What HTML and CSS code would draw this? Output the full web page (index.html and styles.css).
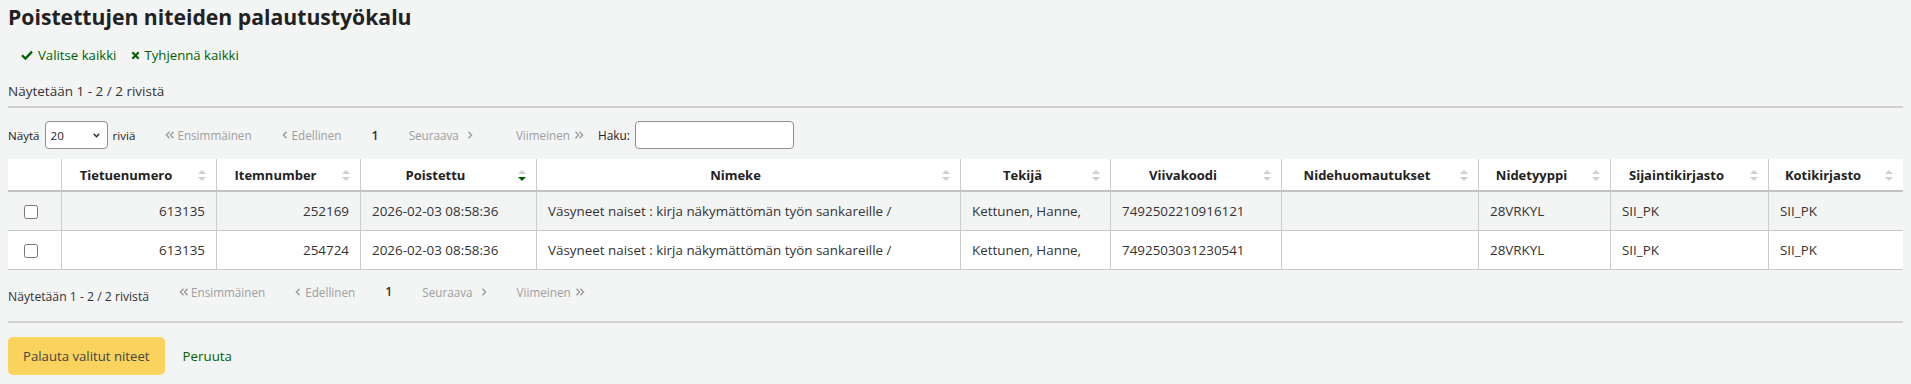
FILE: index.html
```html
<!DOCTYPE html>
<html lang="fi">

<head>
    <meta charset="UTF-8">
    <meta name="viewport" content="width=device-width, initial-scale=1.0">
    <title>Poistettujen niteiden palautustyökalu</title>
    <link rel="stylesheet" href="styles.css">
</head>

<body>
    <main class="page">
        <h1>Poistettujen niteiden palautustyökalu</h1>

        <div class="select-links">
            <a href="#">
                <svg class="icon-check" viewBox="0 0 12 10" width="12" height="10">
                    <polyline points="1,5.2 4.4,8.6 11,1.6" fill="none" stroke="currentColor" stroke-width="2.3" />
                </svg>
                Valitse kaikki
            </a>
            <a href="#">
                <svg class="icon-x" viewBox="0 0 9 9" width="9" height="9">
                    <path d="M1.3 1.3 L7.7 7.7 M7.7 1.3 L1.3 7.7" stroke="currentColor" stroke-width="2.1" />
                </svg>
                Tyhjennä kaikki
            </a>
        </div>

        <div class="info">Näytetään 1 - 2 / 2 rivistä</div>
        <hr class="rule">

        <div class="controls">
            <label class="length">Näytä
                <span class="select-box">
                    <select>
                        <option>20</option>
                        <option>50</option>
                        <option>100</option>
                    </select>
                    <svg viewBox="0 0 7 5" width="7" height="5">
                        <polyline points="0.8,0.8 3.5,3.8 6.2,0.8" fill="none" stroke="#222" stroke-width="1.3" />
                    </svg>
                </span>
                riviä</label>
            <div class="paging paging-top">
                <span class="page-btn disabled">
                    <svg viewBox="0 0 10 8" width="10" height="8">
                        <path d="M4.5 0.8 L1.5 4 L4.5 7.2 M8.5 0.8 L5.5 4 L8.5 7.2" fill="none" stroke="currentColor" stroke-width="1.5" />
                    </svg>Ensimmäinen</span>
                <span class="page-btn disabled">
                    <svg viewBox="0 0 6 8" width="6" height="8">
                        <path d="M4.5 0.8 L1.5 4 L4.5 7.2" fill="none" stroke="currentColor" stroke-width="1.5" />
                    </svg>
                    Edellinen</span>
                <span class="page-btn current">1</span>
                <span class="page-btn disabled next">Seuraava
                    <svg viewBox="0 0 6 8" width="6" height="8">
                        <path d="M1.5 0.8 L4.5 4 L1.5 7.2" fill="none" stroke="currentColor" stroke-width="1.5" />
                    </svg></span>
                <span class="page-btn disabled last">Viimeinen
                    <svg viewBox="0 0 10 8" width="10" height="8">
                        <path d="M1.5 0.8 L4.5 4 L1.5 7.2 M5.5 0.8 L8.5 4 L5.5 7.2" fill="none" stroke="currentColor" stroke-width="1.5" />
                    </svg></span>
            </div>
            <label class="filter">Haku: <input type="search"></label>
        </div>

        <table class="items">
            <colgroup>
                <col class="c-check">
                <col class="c-biblio">
                <col class="c-item">
                <col class="c-date">
                <col class="c-title">
                <col class="c-author">
                <col class="c-barcode">
                <col class="c-notes">
                <col class="c-type">
                <col class="c-holding">
                <col>
            </colgroup>
            <thead>
                <tr>
                    <th></th>
                    <th><div class="sort-head"><span>Tietuenumero</span><svg class="sort" viewBox="0 0 8 13"><polygon class="up" points="0,5 4,1 8,5" /><polygon class="down" points="0,8 4,12 8,8" /></svg></div></th>
                    <th><div class="sort-head"><span>Itemnumber</span><svg class="sort" viewBox="0 0 8 13"><polygon class="up" points="0,5 4,1 8,5" /><polygon class="down" points="0,8 4,12 8,8" /></svg></div></th>
                    <th><div class="sort-head"><span>Poistettu</span><svg class="sort sorted-desc" viewBox="0 0 8 13"><polygon class="up" points="0,5 4,1 8,5" /><polygon class="down" points="0,8 4,12 8,8" /></svg></div></th>
                    <th><div class="sort-head"><span>Nimeke</span><svg class="sort" viewBox="0 0 8 13"><polygon class="up" points="0,5 4,1 8,5" /><polygon class="down" points="0,8 4,12 8,8" /></svg></div></th>
                    <th><div class="sort-head"><span>Tekijä</span><svg class="sort" viewBox="0 0 8 13"><polygon class="up" points="0,5 4,1 8,5" /><polygon class="down" points="0,8 4,12 8,8" /></svg></div></th>
                    <th><div class="sort-head"><span>Viivakoodi</span><svg class="sort" viewBox="0 0 8 13"><polygon class="up" points="0,5 4,1 8,5" /><polygon class="down" points="0,8 4,12 8,8" /></svg></div></th>
                    <th><div class="sort-head"><span>Nidehuomautukset</span><svg class="sort" viewBox="0 0 8 13"><polygon class="up" points="0,5 4,1 8,5" /><polygon class="down" points="0,8 4,12 8,8" /></svg></div></th>
                    <th><div class="sort-head"><span>Nidetyyppi</span><svg class="sort" viewBox="0 0 8 13"><polygon class="up" points="0,5 4,1 8,5" /><polygon class="down" points="0,8 4,12 8,8" /></svg></div></th>
                    <th><div class="sort-head"><span>Sijaintikirjasto</span><svg class="sort" viewBox="0 0 8 13"><polygon class="up" points="0,5 4,1 8,5" /><polygon class="down" points="0,8 4,12 8,8" /></svg></div></th>
                    <th><div class="sort-head"><span>Kotikirjasto</span><svg class="sort" viewBox="0 0 8 13"><polygon class="up" points="0,5 4,1 8,5" /><polygon class="down" points="0,8 4,12 8,8" /></svg></div></th>
                </tr>
            </thead>
            <tbody>
                <tr>
                    <td class="check"><input type="checkbox"></td>
                    <td class="num">613135</td>
                    <td class="num">252169</td>
                    <td>2026-02-03 08:58:36</td>
                    <td>Väsyneet naiset : kirja näkymättömän työn sankareille /</td>
                    <td>Kettunen, Hanne,</td>
                    <td>7492502210916121</td>
                    <td></td>
                    <td>28VRKYL</td>
                    <td>SII_PK</td>
                    <td>SII_PK</td>
                </tr>
                <tr>
                    <td class="check"><input type="checkbox"></td>
                    <td class="num">613135</td>
                    <td class="num">254724</td>
                    <td>2026-02-03 08:58:36</td>
                    <td>Väsyneet naiset : kirja näkymättömän työn sankareille /</td>
                    <td>Kettunen, Hanne,</td>
                    <td>7492503031230541</td>
                    <td></td>
                    <td>28VRKYL</td>
                    <td>SII_PK</td>
                    <td>SII_PK</td>
                </tr>
            </tbody>
        </table>

        <div class="table-footer">
            <div class="info-small">Näytetään 1 - 2 / 2 rivistä</div>
            <div class="paging">
                <span class="page-btn disabled">
                    <svg viewBox="0 0 10 8" width="10" height="8">
                        <path d="M4.5 0.8 L1.5 4 L4.5 7.2 M8.5 0.8 L5.5 4 L8.5 7.2" fill="none" stroke="currentColor" stroke-width="1.5" />
                    </svg>Ensimmäinen</span>
                <span class="page-btn disabled">
                    <svg viewBox="0 0 6 8" width="6" height="8">
                        <path d="M4.5 0.8 L1.5 4 L4.5 7.2" fill="none" stroke="currentColor" stroke-width="1.5" />
                    </svg>
                    Edellinen</span>
                <span class="page-btn current">1</span>
                <span class="page-btn disabled next">Seuraava
                    <svg viewBox="0 0 6 8" width="6" height="8">
                        <path d="M1.5 0.8 L4.5 4 L1.5 7.2" fill="none" stroke="currentColor" stroke-width="1.5" />
                    </svg></span>
                <span class="page-btn disabled last">Viimeinen
                    <svg viewBox="0 0 10 8" width="10" height="8">
                        <path d="M1.5 0.8 L4.5 4 L1.5 7.2 M5.5 0.8 L8.5 4 L5.5 7.2" fill="none" stroke="currentColor" stroke-width="1.5" />
                    </svg></span>
            </div>
        </div>
        <hr class="rule rule-bottom">

        <div class="actions">
            <button class="btn-primary" type="submit">Palauta valitut niteet</button>
            <a href="#">Peruuta</a>
        </div>
    </main>
</body>

</html>
```

FILE: styles.css
```css
* {
    box-sizing: border-box;
}

body {
    margin: 0;
    background-color: #f3f4f4;
    font-family: "Open Sans", sans-serif;
    font-size: 13.4px;
    color: #333;
}

a {
    color: #006100;
    text-decoration: none;
}

.page {
    padding: 4px 8px 0;
}

h1 {
    margin: 0;
    font-size: 21.2px;
    line-height: 26px;
    font-weight: 700;
    color: #222;
}

.select-links {
    margin-top: 15px;
    padding-left: 13px;
    display: flex;
    gap: 15px;
    line-height: 20px;
    font-size: 13.2px;
}

.select-links a {
    display: inline-flex;
    align-items: center;
    gap: 5px;
}

.select-links .icon-x {
    margin-right: -1px;
}

.info {
    margin-top: 16px;
    line-height: 20px;
    font-size: 13.5px;
}

.rule {
    margin: 5px 0 0;
    border: 0;
    border-top: 2px solid #d0d0d0;
}

.controls {
    margin-top: 13px;
    height: 28px;
    display: flex;
    align-items: center;
    font-size: 11.6px;
    color: #222;
}

.length,
.filter {
    display: flex;
    align-items: center;
    gap: 5px;
}

.select-box {
    width: 63px;
    height: 28px;
    display: inline-flex;
    align-items: center;
    padding: 0 7px 0 5px;
    border: 1px solid #8f8f8f;
    border-radius: 4px;
    background-color: #fff;
}

.select-box select {
    flex: 1;
    min-width: 0;
    padding: 0;
    border: 0;
    appearance: none;
    background: transparent;
    font: inherit;
    color: #222;
    outline: none;
}

.paging {
    margin-left: 15px;
    display: flex;
    align-items: center;
    font-size: 11.7px;
}

.page-btn {
    padding: 0 15px;
    display: inline-flex;
    align-items: center;
    gap: 4px;
    white-space: nowrap;
}

.page-btn:first-child svg {
    margin-right: -2px;
}

.page-btn.next {
    gap: 8px;
}

.paging-top .page-btn.last {
    margin-left: 13px;
}

.page-btn.disabled {
    color: #9e9e9e;
}

.page-btn.current {
    color: #333;
    font-weight: 600;
    font-size: 12.4px;
}

.filter {
    margin-left: -1px;
    font-size: 11.8px;
}

.filter input {
    width: 159px;
    height: 28px;
    border: 1px solid #8f8f8f;
    border-radius: 4px;
    background-color: #fff;
}

.items {
    width: 100%;
    margin-top: 10px;
    table-layout: fixed;
    border-collapse: separate;
    border-spacing: 0;
    background-color: #fff;
}

.c-check { width: 54px; }
.c-biblio { width: 155px; }
.c-item { width: 144px; }
.c-date { width: 176px; }
.c-title { width: 424px; }
.c-author { width: 150px; }
.c-barcode { width: 171px; }
.c-notes { width: 197px; }
.c-type { width: 132px; }
.c-holding { width: 158px; }

.items th {
    padding: 9px 10px 7px 8px;
    line-height: 15px;
    font-size: 13px;
    font-weight: 700;
    color: #222;
    border-right: 1px solid #cdcdcd;
    border-bottom: 2px solid #c2c2c2;
}

.items td {
    padding: 9px 11px;
    line-height: 20px;
    white-space: nowrap;
    overflow: hidden;
    border-right: 1px solid #cdcdcd;
    border-bottom: 1px solid #c8c8c8;
}

.items th:last-child,
.items td:last-child {
    border-right: 0;
}

.items tbody tr:nth-child(odd) td {
    background-color: #f3f4f4;
}

.items td.num {
    text-align: right;
}

.items td.check {
    padding: 0 0 0 16px;
}

.items td.check input {
    display: block;
    width: 14px;
    height: 14px;
    margin: 2px 0 0;
}

.sort-head {
    display: flex;
    align-items: center;
}

.sort-head span {
    flex: 1;
    text-align: center;
}

.sort {
    flex: none;
    width: 8px;
    height: 13px;
    margin-left: 16px;
    fill: #cfcfcf;
}

.sort.sorted-desc .down {
    fill: #006100;
}

.table-footer {
    margin-top: 13px;
    display: flex;
    align-items: flex-start;
    line-height: 18px;
}

.info-small {
    margin-top: 5px;
    font-size: 12.2px;
}

.rule-bottom {
    margin-top: 15px;
}

.actions {
    margin-top: 14px;
    display: flex;
    align-items: center;
    gap: 18px;
}

.btn-primary {
    height: 38px;
    padding: 0 15px;
    border: 0;
    border-radius: 5px;
    background-color: #fad35e;
    font: inherit;
    font-size: 13.2px;
    color: #444;
}

.actions a {
    font-size: 13.3px;
}
```
